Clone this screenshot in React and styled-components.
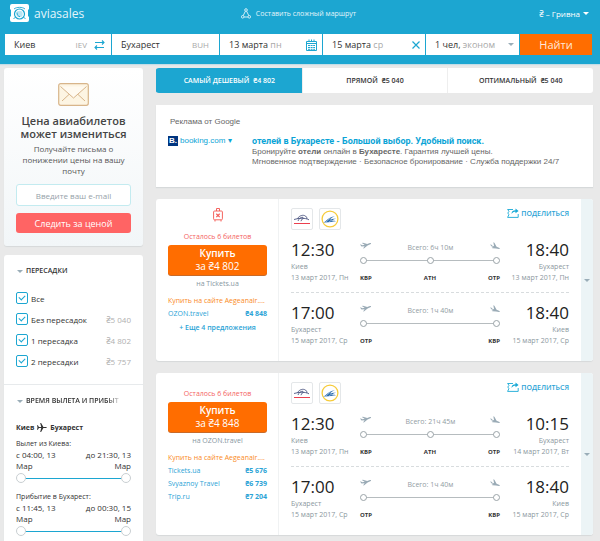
import React, { useState } from 'react'
import styled, { createGlobalStyle } from 'styled-components'

const GlobalStyle = createGlobalStyle`
* {
  box-sizing: border-box;
}
body {
  margin: 0;
  background: #e9e9e9;
  color: #333;
  font-family: "Open Sans", "Noto Sans", sans-serif;
  font-size: 7px;
  line-height: 11px;
}
button, input, select {
  font-family: inherit;
  color: inherit;
}
button {
  border: 0;
  padding: 0;
  cursor: pointer;
}
h2, h3, p {
  margin: 0;
}
a {
  text-decoration: none;
}
svg {
  display: block;
  flex: none;
}
`

const Page = styled.div`
  min-height: 100vh;
  display: flex;
  flex-direction: column;
`

/* header */

const Header = styled.header`
  padding: 0 8px 9px 5px;
  background: #1ca6d1;
  box-shadow: 0 1px 1px #c4dde6;
`
const TopBar = styled.div`
  display: grid;
  grid-template-columns: 1fr auto 1fr;
  align-items: center;
  height: 26px;
  margin-bottom: 8px;
  color: #fff;
`
const Logo = styled.a`
  display: flex;
  align-items: center;
  gap: 5px;
  padding-left: 5px;
  color: #e3f5fb;
  font-size: 12px;
`
const RouteLink = styled.a`
  display: flex;
  align-items: center;
  gap: 5px;
  color: #e3f5fb;
`
const Currency = styled.label`
  display: flex;
  align-items: center;
  justify-content: flex-end;
  gap: 3px;
  padding-right: 3px;
  font-size: 8px;
`
const CurrencySelect = styled.select`
  appearance: none;
  field-sizing: content;
  border: 0;
  padding: 0;
  background: transparent;
  font-size: 8px;
`
const Arrow = styled.span`
  flex: none;
  border: 3px solid transparent;
  border-bottom: 0;
  border-top-color: ${({ $color }) => $color || '#9aadb8'};
`
const SearchForm = styled.form`
  display: grid;
  grid-template-columns: 106fr 107fr 102fr 102fr 93fr 72fr;
  gap: 1px;
  height: 21px;
`
const Field = styled.label`
  display: flex;
  align-items: center;
  min-width: 0;
  padding: 0 6px 0 9px;
  background: #fff;
  font-size: 9px;
`
const CityInput = styled.input`
  flex: 1;
  min-width: 0;
  border: 0;
  padding: 0;
  outline: 0;
  background: transparent;
  font-size: 9px;
`
const CityCode = styled.span`
  margin: 0 ${({ $wide }) => ($wide ? 7 : 4)}px;
  color: #a9a9a9;
  font-size: 8px;
`
const FieldButton = styled.button`
  display: flex;
  align-items: center;
  justify-content: space-between;
  padding: 0 5px 0 9px;
  background: #fff;
  font-size: 9px;
  white-space: nowrap;
`
const Muted = styled.span`
  color: #a9a9a9;
`
const IconButton = styled.button`
  background: transparent;
`
const SearchButton = styled.button`
  background: #ff6d00;
  color: #ffe9d9;
  font-size: 11px;
`

/* columns */

const Main = styled.main`
  flex: 1;
  display: grid;
  grid-template-columns: 139px minmax(0, 1fr);
  gap: 13px;
  padding: 4px 7px 0 4px;
`
const Sidebar = styled.aside`
  display: flex;
  flex-direction: column;
  gap: 9px;
`
const Content = styled.div`
  display: flex;
  flex-direction: column;
  gap: 12px;
  padding-bottom: 6px;
`
const Card = styled.section`
  border-radius: 3px;
  background: #fff;
  box-shadow: 0 1px 1px #d6d9da;
`

/* price subscription */

const Subscribe = styled(Card)`
  display: flex;
  flex-direction: column;
  align-items: center;
  padding: 15px 12px 13px;
  background: linear-gradient(#fff, #f2f6f8);
  text-align: center;
`
const SubscribeTitle = styled.h2`
  margin-top: 8px;
  color: #444;
  font-size: 11px;
  font-weight: 600;
  line-height: 13px;
`
const SubscribeText = styled.p`
  margin: 3px 0 8px;
  color: #555;
  font-size: 8px;
`
const EmailInput = styled.input`
  width: 100%;
  height: 22px;
  border: 1px solid #c3ebf0;
  border-radius: 3px;
  background: #fff;
  font-size: 8px;
  text-align: center;
  &::placeholder {
    color: #96a2a9;
  }
`
const SubscribeButton = styled.button`
  width: 100%;
  height: 20px;
  margin-top: 7px;
  border-radius: 3px;
  background: #ff6464;
  color: #fff;
  font-size: 9px;
`

/* filters */

const Filters = styled(Card)`
  flex: 1;
  border-radius: 3px 3px 0 0;
`
const FilterGroup = styled.div`
  padding: 10px 12px 17px;
  & + & {
    border-top: 1px solid #e7eaec;
    padding-bottom: 0;
  }
`
const FilterTitle = styled.h3`
  display: flex;
  align-items: center;
  gap: 3px;
  padding-left: 1px;
  font-size: 7px;
  font-weight: 600;
  line-height: 12px;
  white-space: nowrap;
`
const FilterTitleText = styled.span`
  mask-image: ${({ $fade }) => ($fade ? 'linear-gradient(90deg, #000 88%, rgba(0, 0, 0, .2))' : 'none')};
`
const CheckRow = styled.label`
  display: flex;
  align-items: center;
  gap: 3px;
  height: 12px;
  margin-top: ${({ $first }) => ($first ? 15 : 9)}px;
  font-size: 8px;
`
const Checkbox = styled.input`
  appearance: none;
  display: grid;
  place-items: center;
  flex: none;
  width: 12px;
  height: 12px;
  margin: 0;
  border: 1px solid #1ca6d1;
  border-radius: 2px;
  background: #fff;
  &:checked::after {
    content: "";
    width: 5px;
    height: 3px;
    margin-bottom: 2px;
    border: solid #1ca6d1;
    border-width: 0 0 1px 1px;
    transform: rotate(-45deg);
  }
`
const CheckPrice = styled.span`
  margin-left: auto;
  color: #b0b0b0;
`
const Direction = styled.p`
  display: flex;
  align-items: center;
  gap: 3px;
  margin: 15px 0 5px;
  font-weight: 700;
`
const RangeLabel = styled.p`
  margin-top: ${({ $next }) => ($next ? 6 : 0)}px;
`
const RangeValues = styled.div`
  display: flex;
  justify-content: space-between;
  font-size: 8px;
`
const RangeValue = styled.span`
  width: 46px;
  text-align: ${({ $end }) => ($end ? 'right' : 'left')};
`
const RangeTrack = styled.div`
  display: grid;
  align-items: center;
  height: 14px;
  background: linear-gradient(#1ca6d1, #1ca6d1) center / calc(100% - 12px) 1px no-repeat;
`
const Range = styled.input`
  appearance: none;
  grid-area: 1 / 1;
  width: 100%;
  height: 10px;
  margin: 0;
  background: transparent;
  pointer-events: none;
  &::-webkit-slider-thumb {
    appearance: none;
    width: 10px;
    height: 10px;
    border: 1px solid #c9cfd2;
    border-radius: 50%;
    background: #fff;
    pointer-events: auto;
  }
`

/* results */

const Tabs = styled.div`
  display: grid;
  grid-template-columns: repeat(3, 1fr);
  height: 25px;
  border-radius: 3px;
  overflow: hidden;
`
const Tab = styled.button`
  display: flex;
  align-items: center;
  justify-content: center;
  gap: 4px;
  border-left: 1px solid ${({ $active }) => ($active ? '#1ca6d1' : '#eee')};
  background: ${({ $active }) => ($active ? '#1ca6d1' : '#fff')};
  color: ${({ $active }) => ($active ? '#fff' : '#333')};
  font-size: 7px;
  font-weight: 600;
`
const Ad = styled(Card)`
  height: 82px;
  padding: 12px 14px 12px 12px;
  border-radius: 0;
  color: #666;
  font-family: "Liberation Sans", Arial, sans-serif;
  font-size: 8px;
  line-height: 10px;
`
const AdLabel = styled.p`
  padding-left: 2px;
`
const AdRow = styled.div`
  display: flex;
  margin-top: 9px;
`
const AdSource = styled.a`
  display: flex;
  align-items: center;
  gap: 2px;
  width: 84px;
  height: 10px;
  color: #0ba4d6;
`
const AdBadge = styled.span`
  width: 10px;
  height: 10px;
  background: #003580;
  color: #fff;
  font-size: 8px;
  font-weight: 700;
  text-align: center;
`
const AdTitle = styled.a`
  display: block;
  margin-bottom: 1px;
  color: #0ba4d6;
  font-family: Roboto, sans-serif;
  font-size: 9px;
  font-weight: 700;
`
const TicketCard = styled(Card)`
  display: grid;
  grid-template-columns: 123px minmax(0, 1fr) 12px;
  min-height: 162px;
  overflow: hidden;
`
const Offers = styled.div`
  display: flex;
  flex-direction: column;
  align-items: center;
  padding: ${({ $baggage }) => ($baggage ? 9 : 15)}px 11px 0 12px;
  border-right: 1px solid #f0f2f3;
`
const SeatsLeft = styled.p`
  margin: ${({ $baggage }) => ($baggage ? 9 : 0)}px 0 3px;
  color: #f4645f;
`
const BuyButton = styled.button`
  width: 100%;
  height: 30px;
  border-radius: 3px;
  background: #ff6d00;
  box-shadow: 0 1px 0 #c96a28;
  color: #fff;
  font-size: 10px;
  line-height: 13px;
`
const BuyText = styled.span`
  display: block;
  font-weight: 600;
`
const Seller = styled.p`
  margin: 3px 0 5px;
  color: #8796a1;
`
const OfferLink = styled.a`
  display: flex;
  justify-content: space-between;
  width: 100%;
  color: ${({ $direct }) => ($direct ? '#fa8a1e' : '#2ba3d6')};
  line-height: 13px;
  white-space: nowrap;
`
const MoreOffers = styled.a`
  margin-top: 2px;
  color: #2ba3d6;
  font-weight: 600;
`
const Flights = styled.div`
  padding: 9px 12px 0;
`
const FlightsTop = styled.div`
  display: flex;
  gap: 6px;
`
const Airline = styled.span`
  display: grid;
  place-items: center;
  width: 22px;
  height: 22px;
  border: 1px solid #e4e7e9;
  border-radius: 2px;
`
const Share = styled.button`
  display: flex;
  align-items: center;
  gap: 2px;
  height: 10px;
  margin-left: auto;
  background: transparent;
  color: #2ba3d6;
  font-size: 7px;
  font-weight: 600;
`
const FlightRow = styled.div`
  display: grid;
  grid-template-columns: 62px minmax(0, 1fr) 62px;
  gap: 7px;
  padding-top: 9px;
  & + & {
    margin-top: 9px;
    border-top: 1px dashed #d8dcde;
  }
`
const Stop = styled.div`
  color: #8b979e;
  text-align: ${({ $end }) => ($end ? 'right' : 'left')};
  white-space: nowrap;
`
const Time = styled.div`
  color: #222;
  font-size: 17px;
  line-height: 22px;
`
const Route = styled.div`
  padding-top: 3px;
`
const RouteHead = styled.div`
  display: flex;
  justify-content: space-between;
  color: #929da3;
`
const RouteLine = styled.div`
  display: flex;
  align-items: center;
  justify-content: space-between;
  height: 7px;
  margin-top: 4px;
  background: linear-gradient(#b6bcbf, #b6bcbf) center / calc(100% - 8px) 1px no-repeat;
`
const Dot = styled.span`
  width: 7px;
  height: 7px;
  border: 1px solid #9aa3a8;
  border-radius: 50%;
  background: #fff;
`
const Codes = styled.div`
  display: flex;
  justify-content: space-between;
  margin-top: 9px;
  color: #333;
  font-size: 6px;
  font-weight: 700;
  line-height: 10px;
`
const Expand = styled.button`
  display: grid;
  place-items: center;
  background: #ecf4f6;
`

const LogoIcon = () => (
  <svg width="19" height="18" viewBox="0 0 19 18">
    <path d="M2 0h15a2 2 0 0 1 2 2v3l-1 1v6l1 1v3a2 2 0 0 1-2 2H2a2 2 0 0 1-2-2v-3l1-1V6L0 5V2a2 2 0 0 1 2-2z" fill="#fff" />
    <path d="M4 5C6.500 2.800 12.500 2.800 15 5M3.500 15l2-2M15.500 15l-2-2" fill="none" stroke="#1ca6d1" strokeWidth=".9" />
    <circle cx="9.500" cy="10" r="5" fill="#fff" stroke="#1ca6d1" strokeWidth="1.200" />
    <circle cx="9.500" cy="10" r="3.200" fill="#b9e4f3" />
    <path d="M7 8.500c0 2.500 1 3.700 3 4.200" fill="none" stroke="#1ca6d1" strokeWidth=".9" />
  </svg>
)

const RouteIcon = () => (
  <svg width="10" height="11" viewBox="0 0 10 11" fill="none" stroke="#e3f5fb" strokeWidth=".9">
    <circle cx="5" cy="2" r="1.300" />
    <circle cx="1.700" cy="8.800" r="1.300" />
    <circle cx="8.300" cy="8.800" r="1.300" />
    <path d="M4.400 3.200 2.200 7.600M5.600 3.200l2.200 4.400M3 9h4" />
  </svg>
)

const SwapIcon = () => (
  <svg width="11" height="10" viewBox="0 0 11 10" fill="none" stroke="#1ca6d1" strokeWidth="1.100">
    <path d="M1 2.500h9M8 .5l2 2-2 2M10 7.500H1M3 5.500l-2 2 2 2" />
  </svg>
)

const CalendarIcon = () => (
  <svg width="11" height="12" viewBox="0 0 11 12" fill="none" stroke="#1ca6d1">
    <path d="M.5 2.500h10v9H.5zM.5 4.500h10M3 .5V3M5.500.5V3M8 .5V3" />
    <path d="M2 6.500h7M2 8.500h7M2 10.300h7" strokeDasharray="2 .6" />
  </svg>
)

const CloseIcon = () => (
  <svg width="8" height="8" viewBox="0 0 8 8" stroke="#1ca6d1" strokeWidth="1.200">
    <path d="M.5.5l7 7M7.500.5l-7 7" />
  </svg>
)

const EnvelopeIcon = () => (
  <svg width="31" height="23" viewBox="0 0 31 23" stroke="#d8b58a" strokeLinejoin="round">
    <rect x=".7" y=".7" width="29.600" height="21.600" rx="2" fill="#fdf5e3" strokeWidth="1.200" />
    <path d="M4 18l7.500-7M27 18l-7.500-7" fill="none" />
    <path d="M2.500 3.500 15.500 15l13-11.500" fill="#fffaf0" />
  </svg>
)

const PlaneIcon = () => (
  <svg width="10" height="9" viewBox="0 0 10 9" fill="#333">
    <path d="M0 2.200h.9l1 1.700h2.300L3.200 0h.9l2.300 3.900h2.500c1.200 0 1.200 1.200 0 1.200H6.400L4.100 9h-.9l1-3.900H1.900l-1 1.700H0l.5-2.300z" />
  </svg>
)

const TakeoffIcon = () => (
  <svg width="11" height="7" viewBox="0 0 11 7" fill="#9aabb6">
    <path d="M0 2.500h.9l1.600.7 2.200-.4L1.800 1l1.200-.3 4.200 1.200 2.700-.9c1.500-.3 1.600.8.4 1.200L7.600 3.500 4.200 6.200 3 6.400l1.600-2.100-3.100.3z" />
  </svg>
)

const LandingIcon = () => (
  <svg width="10" height="8" viewBox="0 0 10 8" fill="#9aabb6">
    <path d="M.2 2.500l.9.1 1.300 1.100 1.700.5L3.300.3l1.100.4 2.200 4.100 2.400.9c1.400.6 1.100 1.500 0 1.400L6 6.500 2.500 6.200l-.9-.5 2-.6-2.300-.8z" />
  </svg>
)

const BaggageIcon = () => (
  <svg width="10" height="14" viewBox="0 0 10 14" fill="none" stroke="#f4645f">
    <path d="M3.500 3V.5h3V3" />
    <rect x=".6" y="3" width="8.800" height="8.800" rx="1" />
    <path d="M3.300 5.700l3.400 3.400M6.700 5.700 3.300 9.100" strokeWidth="1.300" />
    <path d="M2 12v1.500M8 12v1.500" />
  </svg>
)

const ShareIcon = () => (
  <svg width="12" height="10" viewBox="0 0 12 10" fill="none" stroke="#17a9d6" strokeWidth=".9">
    <path d="M6 1.500H.6L2 3.300.8 5l1.100 1.700L.6 9.400h10.600V6" />
    <path d="M4.500 6c0-2.700 1.800-3.700 4-3.700V.6L11.600 3 8.500 5.300V3.700c-1.800 0-3 .5-4 2.300z" fill="#17a9d6" stroke="none" />
  </svg>
)

const AegeanIcon = () => (
  <svg width="18" height="14" viewBox="0 0 18 14" fill="none" stroke="#4a5480">
    <path d="M4.500 6.500C6.500 3.500 10 2.500 12.500 4c1 .7 1.500 1.800 1.500 3M1 7.500c3-.8 5-1.300 8-1.300 2.500 0 5 .6 7 1.600M5 9c1-2.500 3-4 5-3.700M8 9.200c.5-1.800 1.500-2.700 3-3" strokeWidth=".9" />
    <path d="M1 11.500h16" stroke="#ec3f4e" strokeWidth="1.200" />
  </svg>
)

const UiaIcon = () => (
  <svg width="18" height="18" viewBox="0 0 18 18" fill="none">
    <circle cx="9" cy="9" r="7.900" stroke="#f6cb3a" strokeWidth="1.300" />
    <path d="M1.800 12.500C5.500 12 6.500 7.200 14 6.200c-3 1-4 2-5 3.500 1.800-1 4-1.200 6.500-1-2.500.3-3.800 1.200-5 2.400 1.500-.4 3-.3 4.500.2-4 .2-7 1.700-13.200 1.200z" fill="#2769ad" />
    <path d="M4.500 12.300c2-.9 3-3.300 5-4.300M8 12.200c1-.9 1.800-1.800 3-2.400" stroke="#fff" strokeWidth=".5" />
  </svg>
)

const stops = [
  { name: 'Все' },
  { name: 'Без пересадок', price: '₴5 040' },
  { name: '1 пересадка', price: '₴4 802' },
  { name: '2 пересадки', price: '₴5 757' },
]

const tabs = [
  { name: 'САМЫЙ ДЕШЕВЫЙ', price: '₴4 802' },
  { name: 'ПРЯМОЙ', price: '₴5 040' },
  { name: 'ОПТИМАЛЬНЫЙ', price: '₴5 040' },
]

const backFlight = {
  from: { time: '17:00', city: 'Бухарест', date: '15 март 2017, Ср' },
  to: { time: '18:40', city: 'Киев', date: '15 март 2017, Ср' },
  total: '1ч 40м',
  codes: ['OTP', 'KBP'],
}

const tickets = [
  {
    id: 1,
    baggage: true,
    price: '₴4 802',
    seller: 'Tickets.ua',
    offers: [['OZON.travel', '₴4 848']],
    more: '+ Еще 4 предложения',
    flights: [
      {
        from: { time: '12:30', city: 'Киев', date: '13 март 2017, Пн' },
        to: { time: '18:40', city: 'Бухарест', date: '13 март 2017, Пн' },
        total: '6ч 10м',
        codes: ['KBP', 'ATH', 'OTP'],
      },
      backFlight,
    ],
  },
  {
    id: 2,
    price: '₴4 848',
    seller: 'OZON.travel',
    offers: [['Tickets.ua', '₴5 676'], ['Svyaznoy Travel', '₴6 739'], ['Trip.ru', '₴7 204']],
    flights: [
      {
        from: { time: '12:30', city: 'Киев', date: '13 март 2017, Пн' },
        to: { time: '10:15', city: 'Бухарест', date: '14 март 2017, Вт' },
        total: '21ч 45м',
        codes: ['KBP', 'ATH', 'OTP'],
      },
      backFlight,
    ],
  },
]

const TimeRange = ({ label, from, to, next }) => (
  <>
    <RangeLabel $next={next}>{label}:</RangeLabel>
    <RangeValues>
      <RangeValue>{from}</RangeValue>
      <RangeValue $end>{to}</RangeValue>
    </RangeValues>
    <RangeTrack>
      <Range type="range" defaultValue="0" aria-label={`${label}, ${from}`} />
      <Range type="range" defaultValue="100" aria-label={`${label}, ${to}`} />
    </RangeTrack>
  </>
)

const Flight = ({ from, to, total, codes }) => (
  <FlightRow>
    <Stop>
      <Time>{from.time}</Time>
      <div>{from.city}</div>
      <div>{from.date}</div>
    </Stop>
    <Route>
      <RouteHead>
        <TakeoffIcon />
        <span>Всего: {total}</span>
        <LandingIcon />
      </RouteHead>
      <RouteLine>
        {codes.map((code) => <Dot key={code} />)}
      </RouteLine>
      <Codes>
        {codes.map((code) => <span key={code}>{code}</span>)}
      </Codes>
    </Route>
    <Stop $end>
      <Time>{to.time}</Time>
      <div>{to.city}</div>
      <div>{to.date}</div>
    </Stop>
  </FlightRow>
)

const Ticket = ({ ticket }) => (
  <TicketCard as="article">
    <Offers $baggage={ticket.baggage}>
      {ticket.baggage && <BaggageIcon />}
      <SeatsLeft $baggage={ticket.baggage}>Осталось 6 билетов</SeatsLeft>
      <BuyButton>
        <BuyText>Купить</BuyText>
        за {ticket.price}
      </BuyButton>
      <Seller>на {ticket.seller}</Seller>
      <OfferLink href="#" $direct>Купить на сайте Aegeanair....</OfferLink>
      {ticket.offers.map(([name, price]) => (
        <OfferLink href="#" key={name}>
          <span>{name}</span>
          <b>{price}</b>
        </OfferLink>
      ))}
      {ticket.more && <MoreOffers href="#">{ticket.more}</MoreOffers>}
    </Offers>
    <Flights>
      <FlightsTop>
        <Airline><AegeanIcon /></Airline>
        <Airline><UiaIcon /></Airline>
        <Share><ShareIcon />ПОДЕЛИТЬСЯ</Share>
      </FlightsTop>
      {ticket.flights.map((flight, i) => <Flight key={i} {...flight} />)}
    </Flights>
    <Expand aria-label="Подробнее"><Arrow /></Expand>
  </TicketCard>
)

const App = () => {
  const [tab, setTab] = useState(0)

  return (
    <Page>
      <GlobalStyle />
      <Header>
        <TopBar>
          <Logo href="#"><LogoIcon />aviasales</Logo>
          <RouteLink href="#"><RouteIcon />Составить сложный маршрут</RouteLink>
          <Currency>
            <CurrencySelect aria-label="Валюта">
              <option>₴ – Гривна</option>
            </CurrencySelect>
            <Arrow $color="#fff" />
          </Currency>
        </TopBar>
        <SearchForm onSubmit={(e) => e.preventDefault()}>
          <Field>
            <CityInput aria-label="Откуда" defaultValue="Киев" />
            <CityCode $wide>IEV</CityCode>
            <IconButton type="button" aria-label="Поменять местами"><SwapIcon /></IconButton>
          </Field>
          <Field>
            <CityInput aria-label="Куда" defaultValue="Бухарест" />
            <CityCode>BUH</CityCode>
          </Field>
          <FieldButton type="button">
            <span>13 марта <Muted>пн</Muted></span>
            <CalendarIcon />
          </FieldButton>
          <FieldButton type="button">
            <span>15 марта <Muted>ср</Muted></span>
            <CloseIcon />
          </FieldButton>
          <FieldButton type="button">
            <span>1 чел, <Muted>эконом</Muted></span>
            <Arrow />
          </FieldButton>
          <SearchButton>Найти</SearchButton>
        </SearchForm>
      </Header>
      <Main>
        <Sidebar>
          <Subscribe>
            <EnvelopeIcon />
            <SubscribeTitle>Цена авиабилетов может измениться</SubscribeTitle>
            <SubscribeText>Получайте письма о понижении цены на вашу почту</SubscribeText>
            <EmailInput type="email" aria-label="E-mail" placeholder="Введите ваш e-mail" />
            <SubscribeButton>Следить за ценой</SubscribeButton>
          </Subscribe>
          <Filters>
            <FilterGroup>
              <FilterTitle><Arrow /><FilterTitleText>ПЕРЕСАДКИ</FilterTitleText></FilterTitle>
              {stops.map(({ name, price }, i) => (
                <CheckRow key={name} $first={i === 0}>
                  <Checkbox type="checkbox" defaultChecked />
                  {name}
                  {price && <CheckPrice>{price}</CheckPrice>}
                </CheckRow>
              ))}
            </FilterGroup>
            <FilterGroup>
              <FilterTitle><Arrow /><FilterTitleText $fade>ВРЕМЯ ВЫЛЕТА И ПРИБЫТ</FilterTitleText></FilterTitle>
              <Direction>Киев <PlaneIcon /> Бухарест</Direction>
              <TimeRange label="Вылет из Киева" from="с 04:00, 13 Мар" to="до 21:30, 13 Мар" />
              <TimeRange label="Прибытие в Бухарест" from="с 11:45, 13 Мар" to="до 00:30, 15 Мар" next />
            </FilterGroup>
          </Filters>
        </Sidebar>
        <Content>
          <Tabs role="tablist">
            {tabs.map(({ name, price }, i) => (
              <Tab key={name} role="tab" aria-selected={tab === i} $active={tab === i} onClick={() => setTab(i)}>
                <span>{name}</span>
                <span>{price}</span>
              </Tab>
            ))}
          </Tabs>
          <Ad>
            <AdLabel>Реклама от Google</AdLabel>
            <AdRow>
              <AdSource href="#"><AdBadge>B.</AdBadge>booking.com ▾</AdSource>
              <div>
                <AdTitle href="#">отелей в Бухаресте - Большой выбор. Удобный поиск.</AdTitle>
                <p>Бронируйте <b>отели</b> онлайн в <b>Бухаресте</b>. Гарантия лучшей цены.</p>
                <p>Мгновенное подтверждение · Безопасное бронирование · Служба поддержки 24/7</p>
              </div>
            </AdRow>
          </Ad>
          {tickets.map((ticket) => <Ticket key={ticket.id} ticket={ticket} />)}
        </Content>
      </Main>
    </Page>
  )
}

export default App
